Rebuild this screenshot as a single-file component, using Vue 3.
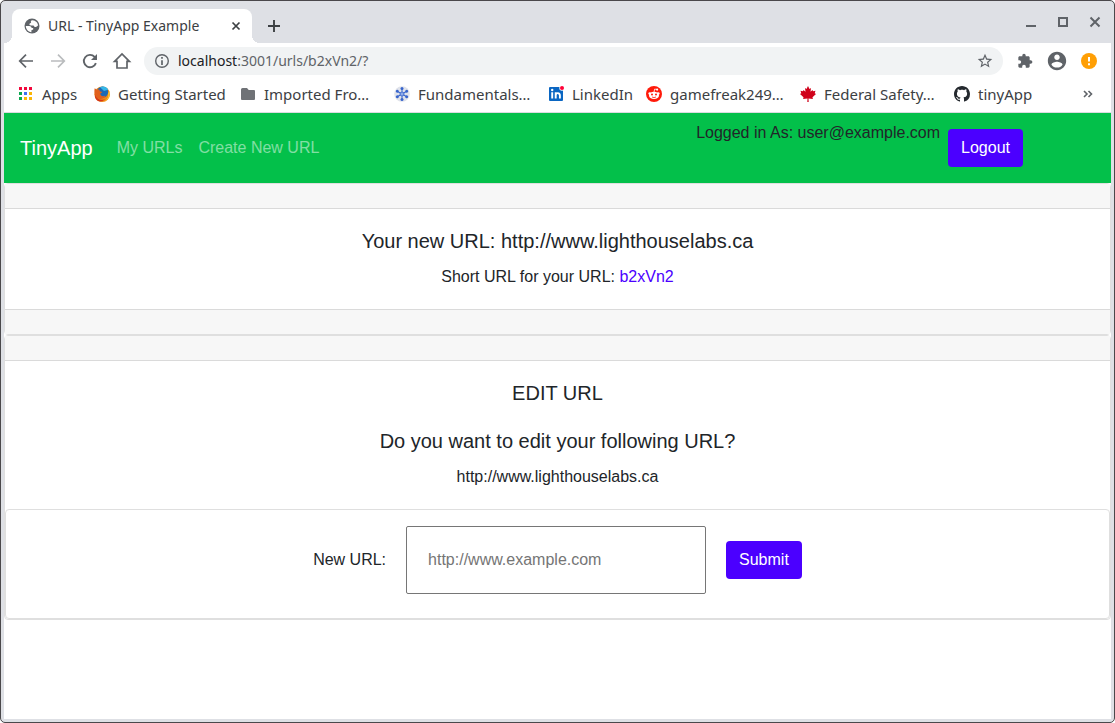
<script setup>
import { ref } from 'vue'

const address = ref({ host: 'localhost', rest: ':3001/urls/b2xVn2/?' })
const newUrl = ref('')
const longUrl = 'http://www.lighthouselabs.ca'
const shortUrl = 'b2xVn2'

const bookmarks = [
  { icon: 'apps', label: 'Apps', width: 76 },
  { icon: 'firefox', label: 'Getting Started', width: 146 },
  { icon: 'folder', label: 'Imported Fro…', width: 154 },
  { icon: 'fundamentals', label: 'Fundamentals…', width: 154 },
  { icon: 'linkedin', label: 'LinkedIn', width: 98 },
  { icon: 'reddit', label: 'gamefreak249…', width: 154 },
  { icon: 'maple', label: 'Federal Safety…', width: 154 },
  { icon: 'github', label: 'tinyApp', width: 90 },
]

const appDots = ['#f2083c', '#f2083c', '#f2083c', '#0ba84f', '#3d6ff2', '#fbb605', '#0ba84f', '#fbb605', '#fbb605']
const spokes = [0, 60, 120, 180, 240, 300]
</script>

<template>
  <div class="window">
    <header class="chrome">
      <div class="tabstrip">
        <div class="tab">
          <svg class="i18" viewBox="0 0 18 18">
            <circle cx="9" cy="9" r="7.500" fill="#5f6368" />
            <path d="M9.500 3.200c-1.800.300-2 1.200-1.300 2.200l-1.700 1.300c-.400.900.300 1.700 1.500 1.700h2.200c.900.100 1.200.700 1.200 1.600h1.300c1 0 1.400-.500 1.600-1.200l.8-.100c-.100-2.900-2.300-5.100-5.600-5.500zM2.800 9h3.400c1.700.100 2.400.900 2.400 2.100h1.300c.700.600.500 1.400-.200 1.700l-1.300.400v2c-3.200-.200-5.500-2.900-5.600-6.200z" fill="#fff" />
          </svg>
          <span class="tab-title">URL - TinyApp Example</span>
          <button class="plain tab-close" aria-label="Close tab">
            <svg class="i16" viewBox="0 0 16 16"><path d="M4.500 4.500l7 7M11.500 4.500l-7 7" stroke="#3c4043" stroke-width="1.700" fill="none" /></svg>
          </button>
        </div>
        <button class="plain new-tab" aria-label="New tab">
          <svg class="i16" viewBox="0 0 16 16"><path d="M8 2v12M2 8h12" stroke="#3c4043" stroke-width="1.900" fill="none" /></svg>
        </button>
        <div class="controls">
          <button class="plain tool" aria-label="Minimize"><svg class="i16" viewBox="0 0 16 16"><path d="M3 12h10" stroke="#5f6368" stroke-width="2" /></svg></button>
          <button class="plain tool" aria-label="Maximize"><svg class="i16" viewBox="0 0 16 16"><path d="M4 4h8v8H4z" stroke="#5f6368" stroke-width="2" fill="none" /></svg></button>
          <button class="plain tool" aria-label="Close"><svg class="i16" viewBox="0 0 16 16"><path d="M3.500 3.500l9 9M12.500 3.500l-9 9" stroke="#5f6368" stroke-width="2" fill="none" /></svg></button>
        </div>
      </div>

      <div class="toolbar">
        <button class="plain tool" aria-label="Back"><svg class="i20" viewBox="0 0 20 20"><path d="M17 10H4M10 3.700L3.700 10l6.300 6.300" stroke="#5f6368" stroke-width="1.700" fill="none" /></svg></button>
        <button class="plain tool" aria-label="Forward"><svg class="i20" viewBox="0 0 20 20"><path d="M3 10h13M10 3.700l6.300 6.300-6.300 6.300" stroke="#babcbe" stroke-width="1.700" fill="none" /></svg></button>
        <button class="plain tool" aria-label="Reload"><svg class="i20" viewBox="0 0 20 20"><path d="M15.900 12.200A6.200 6.200 0 1 1 14.600 5.800L16 7.200" stroke="#5f6368" stroke-width="1.900" fill="none" /><path d="M17 3v6h-6z" fill="#5f6368" /></svg></button>
        <button class="plain tool" aria-label="Home"><svg class="i20" viewBox="0 0 20 20"><path d="M2.600 10.300L10 3l7.400 7.300H15V17H5v-6.700z" stroke="#5f6368" stroke-width="1.700" fill="none" /></svg></button>
        <div class="omnibox">
          <svg class="i16" viewBox="0 0 16 16"><circle cx="8" cy="8" r="6.300" stroke="#5f6368" stroke-width="1.400" fill="none" /><path d="M8 7.200V12M8 4v1.700" stroke="#5f6368" stroke-width="1.700" /></svg>
          <div class="address"><span class="host">{{ address.host }}</span>{{ address.rest }}</div>
          <button class="plain" aria-label="Bookmark this page"><svg class="i16" viewBox="1 1 22 22"><path fill="#5f6368" d="M22 9.240l-7.190-.620L12 2 9.190 8.630 2 9.240l5.460 4.730L5.820 21 12 17.270 18.180 21l-1.630-7.030L22 9.240zM12 15.400l-3.760 2.270 1-4.280-3.320-2.880 4.380-.380L12 6.100l1.710 4.040 4.380.380-3.320 2.880 1 4.280L12 15.400z" /></svg></button>
        </div>
        <div class="actions">
          <button class="plain tool" aria-label="Extensions"><svg class="i16" viewBox="0 0 24 24"><path fill="#5f6368" d="M20.500 11H19V7c0-1.100-.900-2-2-2h-4V3.500C13 2.120 11.880 1 10.500 1S8 2.120 8 3.500V5H4c-1.100 0-1.990.900-1.990 2v3.800H3.500c1.490 0 2.700 1.210 2.700 2.700s-1.210 2.700-2.700 2.700H2V20c0 1.100.900 2 2 2h3.800v-1.500c0-1.490 1.210-2.700 2.700-2.700 1.490 0 2.700 1.210 2.700 2.700V22H17c1.100 0 2-.900 2-2v-4h1.500c1.380 0 2.500-1.120 2.500-2.500S21.880 11 20.500 11z" /></svg></button>
          <button class="plain tool" aria-label="Profile"><svg class="i22" viewBox="0 0 24 24"><path fill="#5f6368" d="M12 2C6.480 2 2 6.480 2 12s4.480 10 10 10 10-4.480 10-10S17.520 2 12 2zm0 3c1.660 0 3 1.340 3 3s-1.340 3-3 3-3-1.340-3-3 1.340-3 3-3zm0 14.200c-2.500 0-4.710-1.280-6-3.220.030-1.990 4-3.080 6-3.080 1.990 0 5.970 1.090 6 3.080-1.290 1.940-3.500 3.220-6 3.220z" /></svg></button>
          <button class="plain tool" aria-label="Update available"><svg class="i16" viewBox="0 0 16 16"><circle cx="8" cy="8" r="8" fill="#ff9f05" /><path d="M8 4v4.500M8 10.300v1.900" stroke="#fff" stroke-width="2" /></svg></button>
        </div>
      </div>

      <nav class="bookmarks" aria-label="Bookmarks">
        <a v-for="mark in bookmarks" :key="mark.label" href="#" class="bookmark" :style="{ width: mark.width + 'px' }">
          <svg class="i16" viewBox="0 0 16 16">
            <template v-if="mark.icon === 'apps'">
              <rect v-for="(dot, n) in appDots" :key="n" :x="1 + (n % 3) * 5" :y="1 + Math.floor(n / 3) * 5" width="3" height="3" :fill="dot" />
            </template>
            <template v-else-if="mark.icon === 'firefox'">
              <circle cx="8.200" cy="8.200" r="7.800" fill="#f08a15" />
              <path d="M15.300 4.800c1.300 4.600-.700 9.300-5 10.700 3.300-2 4.500-5 3.900-8.400z" fill="#ffcb2e" />
              <circle cx="8.600" cy="6.100" r="5.600" fill="#1b69b6" />
              <path d="M6 1.200c3-1.700 7-.500 8.200 2.500L10 5z" fill="#35b6e8" />
              <path d="M.700 2.300l2.200 1.500c1-.500 2-.400 2.900 0-.400.900-.200 1.500.800 1.800l1.900.400-2.200 1.600c.200 2.500 2.400 3.300 5.200 2-.900 3-5 4.400-8.200 2.500C.800 10.300-.200 6 .700 2.300z" fill="#e1601c" />
              <path d="M1 8.500c1.300 4.500 6 6.600 10 4.400-2 3-6.700 3.500-9 .300C1 12 .700 10 1 8.500z" fill="#d43818" />
            </template>
            <path v-else-if="mark.icon === 'folder'" d="M2.500 2H7l1.700 2h5.300q1 0 1 1v8q0 1-1 1H2q-1 0-1-1V3.500Q1 2 2.500 2z" fill="#6f7276" />
            <template v-else-if="mark.icon === 'fundamentals'">
              <circle cx="8" cy="8" r="7.800" fill="#dfe2ea" />
              <g v-for="angle in spokes" :key="angle" :transform="`rotate(${angle} 8 8)`">
                <path d="M8 8V3" stroke="#3764cc" stroke-width="1" /><circle cx="8" cy="2.600" r="1.500" fill="#3764cc" />
              </g>
              <circle cx="8" cy="8" r="2" fill="#8facea" stroke="#3764cc" stroke-width=".800" />
            </template>
            <template v-else-if="mark.icon === 'linkedin'">
              <rect x="1" y="1" width="14" height="14" rx="1" fill="#0a66c2" />
              <path d="M4.200 6.300v6.300M7.700 6.300v6.300M7.700 9.500c0-3 4.200-3.200 4.200 0v3.100" stroke="#fff" stroke-width="1.900" fill="none" />
              <circle cx="4.200" cy="4" r="1.200" fill="#fff" /><circle cx="14" cy="2" r="2.700" fill="#fff" /><circle cx="14" cy="2" r="2" fill="#ff0037" />
            </template>
            <template v-else-if="mark.icon === 'reddit'">
              <circle cx="8" cy="8" r="8" fill="#ff1a0a" />
              <circle cx="3.800" cy="7.600" r="1.400" fill="#fff" /><circle cx="12.200" cy="7.600" r="1.400" fill="#fff" /><circle cx="11.100" cy="3.600" r="1.100" fill="#fff" />
              <path d="M8 6l.700-3 2.200.500" stroke="#fff" stroke-width=".800" fill="none" />
              <ellipse cx="8" cy="9.400" rx="5" ry="3.600" fill="#fff" />
              <circle cx="6" cy="8.600" r="1" fill="#ff1a0a" /><circle cx="10" cy="8.600" r="1" fill="#ff1a0a" />
              <path d="M6 11q2 1.200 4 0" stroke="#ff1a0a" stroke-width=".800" fill="none" />
            </template>
            <path v-else-if="mark.icon === 'maple'" fill="#d0021b" d="M8 0l1.500 2.900 1.500-.800-.500 3.700 2-1.800.500 1.200 2.500-.400-.800 2.500L16 8l-3.500 3.200.400 1.800-4.400-.600.200 3.600H7.300l.200-3.600-4.400.600.400-1.800L0 8l1.300-.700L.500 4.800l2.500.400.500-1.200 2 1.800L5 2.100l1.500.800z" />
            <path v-else fill="#24292e" fill-rule="evenodd" d="M8 0C3.580 0 0 3.580 0 8c0 3.540 2.290 6.530 5.470 7.590.4.070.55-.17.55-.38 0-.19-.01-.82-.01-1.490-2.010.37-2.530-.49-2.690-.94-.09-.23-.48-.94-.82-1.130-.28-.15-.68-.52-.01-.53.63-.01 1.080.58 1.230.82.72 1.210 1.870.87 2.330.66.07-.52.28-.87.51-1.070-1.780-.2-3.640-.89-3.640-3.950 0-.87.31-1.590.82-2.150-.08-.2-.36-1.020.08-2.120 0 0 .67-.21 2.200.82.64-.18 1.320-.27 2-.27s1.360.09 2 .27c1.530-1.040 2.200-.82 2.200-.82.44 1.100.16 1.920.08 2.120.51.56.82 1.270.82 2.150 0 3.070-1.870 3.750-3.650 3.950.29.25.54.73.54 1.480 0 1.070-.01 1.930-.01 2.200 0 .21.15.46.55.38A8.010 8.010 0 0 0 16 8c0-4.420-3.580-8-8-8z" />
          </svg>
          <span>{{ mark.label }}</span>
        </a>
        <button class="plain tool more" aria-label="More bookmarks"><svg class="i16" viewBox="0 0 16 16"><path d="M4 5l3 3-3 3M8.500 5l3 3-3 3" stroke="#5f6368" stroke-width="1.600" fill="none" /></svg></button>
      </nav>
    </header>

    <main class="page">
      <nav class="navbar" aria-label="Main">
        <a href="#" class="brand">TinyApp</a>
        <a href="#" class="nav-link">My URLs</a>
        <a href="#" class="nav-link">Create New URL</a>
        <div class="session">
          <span class="user">Logged in As: user@example.com</span>
          <button class="btn">Logout</button>
        </div>
      </nav>

      <section class="card">
        <div class="card-band"></div>
        <div class="card-body">
          <h5>Your new URL: {{ longUrl }}</h5>
          <p>Short URL for your URL: <a href="#">{{ shortUrl }}</a></p>
        </div>
        <div class="card-band foot"></div>
      </section>

      <section class="card">
        <div class="card-band"></div>
        <div class="card-body">
          <h5 class="heading">EDIT URL</h5>
          <h5>Do you want to edit your following URL?</h5>
          <p>{{ longUrl }}</p>
        </div>
        <form class="card edit-form" @submit.prevent>
          <label for="new-url">New URL:</label>
          <input id="new-url" v-model="newUrl" type="text" placeholder="http://www.example.com">
          <button class="btn" type="submit">Submit</button>
        </form>
      </section>
    </main>
  </div>
</template>

<style>
body {
  background: #fff;
}
</style>

<style scoped>
* {
  box-sizing: border-box;
}
.window {
  display: flex;
  flex-direction: column;
  min-height: 100vh;
  border: 1px solid #4a484b;
  border-radius: 5px;
  background: #dee0e5;
  font-family: "Liberation Sans", Arial, sans-serif;
  font-size: 16px;
  line-height: 24px;
  color: #212529;
}
.chrome {
  font-family: "Noto Sans", "Open Sans", sans-serif;
  font-size: 14px;
  line-height: 20px;
  color: #3c4043;
}
svg {
  display: block;
  flex: none;
  overflow: visible;
}
.i16 { width: 16px; height: 16px; }
.i18 { width: 18px; height: 18px; }
.i20 { width: 20px; height: 20px; }
.i22 { width: 22px; height: 22px; }
.plain {
  display: flex;
  align-items: center;
  justify-content: center;
  padding: 0;
  border: 0;
  background: none;
}
.tool {
  width: 32px;
  height: 28px;
  flex: none;
}
.tabstrip {
  display: flex;
  align-items: flex-end;
  height: 42px;
  padding-left: 11px;
}
.tab {
  position: relative;
  display: flex;
  align-items: center;
  gap: 7px;
  width: 240px;
  height: 34px;
  padding: 0 8px 0 11px;
  border-radius: 8px 8px 0 0;
  background: #fff;
}
.tab::before,
.tab::after {
  content: "";
  position: absolute;
  bottom: 0;
  width: 8px;
  height: 8px;
}
.tab::before {
  right: 100%;
  background: radial-gradient(circle at 0 0, transparent 8px, #fff 8px);
}
.tab::after {
  left: 100%;
  background: radial-gradient(circle at 100% 0, transparent 8px, #fff 8px);
}
.tab-title {
  flex: 1;
  white-space: nowrap;
}
.new-tab {
  width: 28px;
  height: 34px;
  margin-left: 8px;
}
.controls {
  display: flex;
  align-self: center;
  margin-left: auto;
  padding-right: 3px;
}
.toolbar,
.bookmarks {
  display: flex;
  align-items: center;
  margin: 0 3px;
  background: #fff;
}
.toolbar {
  height: 36px;
  padding-left: 6px;
}
.omnibox {
  display: flex;
  flex: 1;
  align-items: center;
  gap: 8px;
  height: 28px;
  margin: 0 6px;
  padding: 0 10px;
  border-radius: 14px;
  background: #f1f3f4;
}
.address {
  flex: 1;
  color: #5f6368;
}
.host {
  color: #202124;
}
.actions {
  display: flex;
  padding-right: 6px;
}
.bookmarks {
  height: 34px;
  padding: 0 7px 4px 14px;
  border-bottom: 1px solid #dadce0;
  font-size: 15px;
}
.bookmark {
  display: flex;
  align-items: center;
  gap: 8px;
  color: #3c4043;
  text-decoration: none;
  white-space: nowrap;
}
.more {
  margin-left: auto;
}
.page {
  flex: 1;
  margin: 0 3px 3px;
  background: #fff;
}
.navbar {
  display: flex;
  align-items: center;
  min-height: 70px;
  padding: 0 88px 0 16px;
  background: #03c04a;
}
.brand,
.nav-link {
  color: #fff;
  text-decoration: none;
}
.brand {
  margin-right: 16px;
  font-size: 20px;
}
.nav-link {
  padding: 0 8px;
  color: rgba(255, 255, 255, 0.5);
}
.session {
  display: flex;
  gap: 8px;
  height: 54px;
  margin-left: auto;
}
.session .btn {
  margin-top: 8px;
}
.btn {
  height: 38px;
  padding: 0 13px;
  border: 0;
  border-radius: 4px;
  background: #4b00ff;
  color: #fff;
  font: inherit;
}
.card {
  border: 1px solid #dfdfdf;
  border-radius: 4px;
  background: #fff;
}
.card-band {
  height: 25px;
  border-bottom: 1px solid #dadada;
  background: #f7f7f7;
}
.card-band.foot {
  border-top: 1px solid #dadada;
  border-bottom: 0;
}
.card-body {
  padding: 20px;
  text-align: center;
}
h5 {
  margin: 0 0 12px;
  font-size: 20px;
  font-weight: 400;
}
.heading {
  margin-bottom: 24px;
}
p {
  margin: 0;
}
p a {
  color: #4b00ff;
  text-decoration: none;
}
.edit-form {
  display: flex;
  align-items: center;
  justify-content: center;
  gap: 20px;
  padding: 16px 0 24px;
}
.edit-form input {
  width: 300px;
  height: 68px;
  padding: 0 21px;
  border: 1px solid #767676;
  border-radius: 2px;
  background: #fff;
  color: #212529;
  font: inherit;
}
.edit-form input::placeholder {
  color: #757575;
}
</style>
